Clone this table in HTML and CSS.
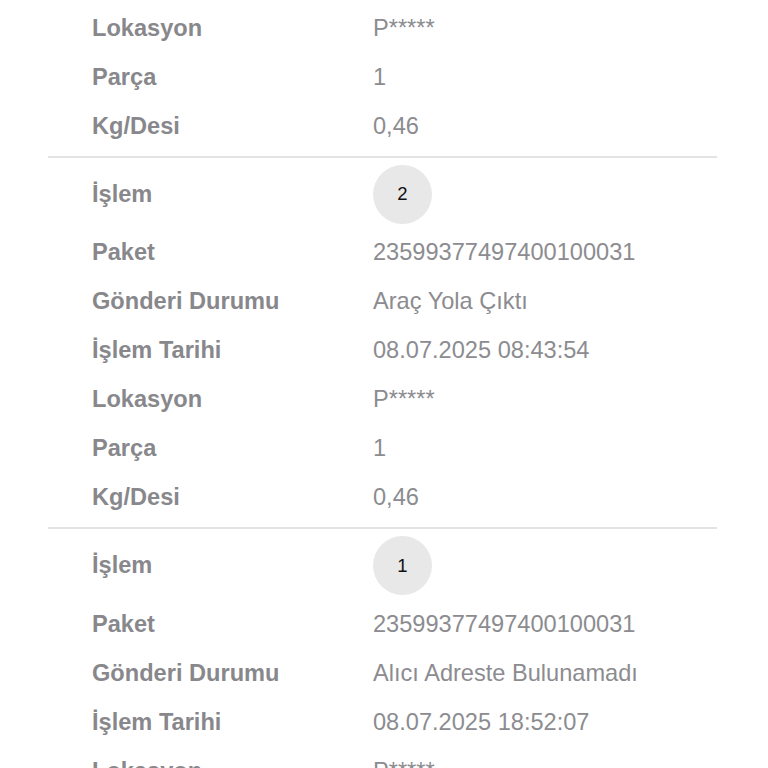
FILE: index.html
```html
<!DOCTYPE html>
<html lang="tr">
<head>
<meta charset="utf-8">
<title>Gönderi Hareketleri</title>
<link rel="stylesheet" href="styles.css">
</head>
<body>
<div class="list">
  <section class="step first">
    <div class="row"><span class="label">Lokasyon</span><span class="value">P*****</span></div>
    <div class="row"><span class="label">Parça</span><span class="value">1</span></div>
    <div class="row"><span class="label">Kg/Desi</span><span class="value">0,46</span></div>
  </section>
  <section class="step">
    <div class="row row-step"><span class="label">İşlem</span><span class="value"><span class="badge">2</span></span></div>
    <div class="row"><span class="label">Paket</span><span class="value">23599377497400100031</span></div>
    <div class="row"><span class="label">Gönderi Durumu</span><span class="value">Araç Yola Çıktı</span></div>
    <div class="row"><span class="label">İşlem Tarihi</span><span class="value">08.07.2025 08:43:54</span></div>
    <div class="row"><span class="label">Lokasyon</span><span class="value">P*****</span></div>
    <div class="row"><span class="label">Parça</span><span class="value">1</span></div>
    <div class="row"><span class="label">Kg/Desi</span><span class="value">0,46</span></div>
  </section>
  <section class="step">
    <div class="row row-step"><span class="label">İşlem</span><span class="value"><span class="badge">1</span></span></div>
    <div class="row"><span class="label">Paket</span><span class="value">23599377497400100031</span></div>
    <div class="row"><span class="label">Gönderi Durumu</span><span class="value">Alıcı Adreste Bulunamadı</span></div>
    <div class="row"><span class="label">İşlem Tarihi</span><span class="value">08.07.2025 18:52:07</span></div>
    <div class="row"><span class="label">Lokasyon</span><span class="value">P*****</span></div>
    <div class="row"><span class="label">Parça</span><span class="value">1</span></div>
    <div class="row"><span class="label">Kg/Desi</span><span class="value">0,46</span></div>
  </section>
</div>
</body>
</html>
```
FILE: styles.css
```css
html, body {
  margin: 0;
  padding: 0;
  background: #ffffff;
}
body {
  font-family: "Liberation Sans", Arial, Helvetica, sans-serif;
  overflow: hidden;
}
.list {
  margin: 0 51px 0 48px;
  padding-top: 4px;
}
.step {
  padding: 3px 0 5px 44px;
  border-top: 2px solid #e3e3e5;
}
.step.first {
  padding-top: 0;
  border-top: none;
}
.row {
  display: grid;
  grid-template-columns: 281px 1fr;
  align-items: center;
  height: 49px;
  font-size: 23.6px;
  line-height: 49px;
}
.row-step {
  height: 67.3px;
}
.label {
  font-weight: bold;
  color: #88888c;
}
.value {
  color: #8c8c90;
  display: flex;
  align-items: center;
}
.badge {
  display: flex;
  align-items: center;
  justify-content: center;
  width: 59px;
  height: 59px;
  border-radius: 50%;
  background: #e8e8e9;
  color: #111111;
  font-size: 18.5px;
  line-height: 1;
}
```
